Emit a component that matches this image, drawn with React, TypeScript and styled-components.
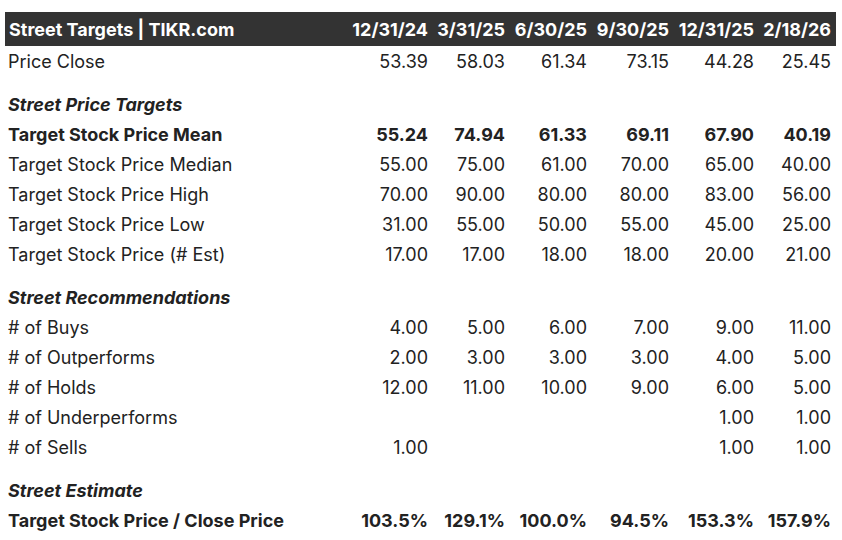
import React from "react";
import styled, { createGlobalStyle } from "styled-components";

const GlobalStyle = createGlobalStyle`
  html, body { margin: 0; padding: 0; background: #ffffff; }
  body { font-family: Inter, "Noto Sans", "Liberation Sans", sans-serif; color: #222; }
`;

const Page = styled.div`
  padding: 12px 0 0 5px;
`;

const Grid = styled.div`
  width: 831px;
  display: grid;
  grid-template-columns: 1fr 86px 77px 82px 82px 85px 77px;
`;

const HeaderCell = styled.div<{ $first?: boolean }>`
  box-sizing: border-box;
  background: #333333;
  color: #ffffff;
  font-weight: 700;
  font-size: 18px;
  height: 34px;
  display: flex;
  align-items: center;
  justify-content: ${(p) => (p.$first ? "flex-start" : "flex-end")};
  padding: ${(p) => (p.$first ? "0 0 0 4px" : "0 5px 0 0")};
  white-space: nowrap;
`;

const Cell = styled.div<{ $first?: boolean; $bold?: boolean }>`
  box-sizing: border-box;
  height: 30px;
  display: flex;
  align-items: center;
  justify-content: ${(p) => (p.$first ? "flex-start" : "flex-end")};
  padding: ${(p) => (p.$first ? "1px 0 0 3px" : "1px 5px 0 0")};
  font-size: 18px;
  font-weight: ${(p) => (p.$bold ? 700 : 400)};
  color: #222;
  white-space: nowrap;
`;

const SectionTitle = styled.div`
  box-sizing: border-box;
  grid-column: 1 / -1;
  height: 30px;
  margin-top: 13px;
  display: flex;
  align-items: center;
  padding: 1px 0 0 3px;
  font-size: 18px;
  font-weight: 700;
  font-style: italic;
  color: #222;
`;

type Row =
  | { kind: "section"; label: string }
  | { kind: "row"; label: string; values: string[]; bold?: boolean };

const headers = ["12/31/24", "3/31/25", "6/30/25", "9/30/25", "12/31/25", "2/18/26"];

const rows: Row[] = [
  { kind: "row", label: "Price Close", values: ["53.39", "58.03", "61.34", "73.15", "44.28", "25.45"] },
  { kind: "section", label: "Street Price Targets" },
  { kind: "row", label: "Target Stock Price Mean", values: ["55.24", "74.94", "61.33", "69.11", "67.90", "40.19"], bold: true },
  { kind: "row", label: "Target Stock Price Median", values: ["55.00", "75.00", "61.00", "70.00", "65.00", "40.00"] },
  { kind: "row", label: "Target Stock Price High", values: ["70.00", "90.00", "80.00", "80.00", "83.00", "56.00"] },
  { kind: "row", label: "Target Stock Price Low", values: ["31.00", "55.00", "50.00", "55.00", "45.00", "25.00"] },
  { kind: "row", label: "Target Stock Price (# Est)", values: ["17.00", "17.00", "18.00", "18.00", "20.00", "21.00"] },
  { kind: "section", label: "Street Recommendations" },
  { kind: "row", label: "# of Buys", values: ["4.00", "5.00", "6.00", "7.00", "9.00", "11.00"] },
  { kind: "row", label: "# of Outperforms", values: ["2.00", "3.00", "3.00", "3.00", "4.00", "5.00"] },
  { kind: "row", label: "# of Holds", values: ["12.00", "11.00", "10.00", "9.00", "6.00", "5.00"] },
  { kind: "row", label: "# of Underperforms", values: ["", "", "", "", "1.00", "1.00"] },
  { kind: "row", label: "# of Sells", values: ["1.00", "", "", "", "1.00", "1.00"] },
  { kind: "section", label: "Street Estimate" },
  { kind: "row", label: "Target Stock Price / Close Price", values: ["103.5%", "129.1%", "100.0%", "94.5%", "153.3%", "157.9%"], bold: true },
];

export default function App() {
  return (
    <>
      <GlobalStyle />
      <Page>
        <Grid>
          <HeaderCell $first>Street Targets | TIKR.com</HeaderCell>
          {headers.map((h) => (
            <HeaderCell key={h}>{h}</HeaderCell>
          ))}
          {rows.map((r, i) =>
            r.kind === "section" ? (
              <SectionTitle key={i}>{r.label}</SectionTitle>
            ) : (
              <React.Fragment key={i}>
                <Cell $first $bold={r.bold}>{r.label}</Cell>
                {r.values.map((v, j) => (
                  <Cell key={j} $bold={r.bold}>{v}</Cell>
                ))}
              </React.Fragment>
            )
          )}
        </Grid>
      </Page>
    </>
  );
}
